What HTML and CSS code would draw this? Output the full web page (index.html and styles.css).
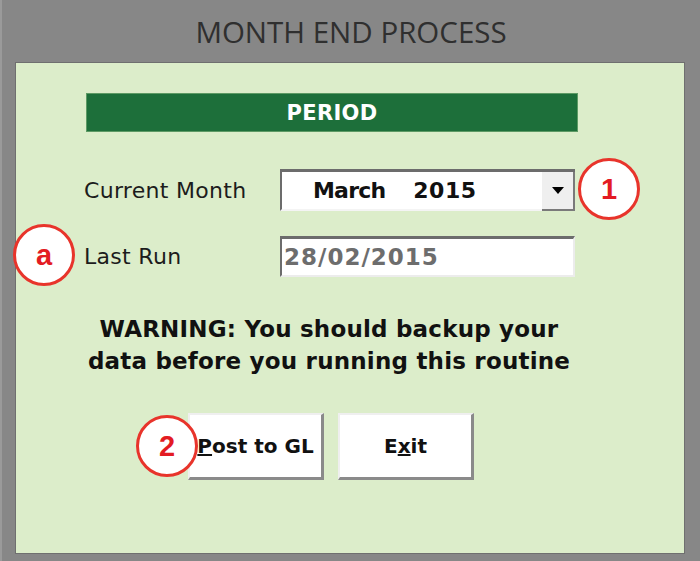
FILE: index.html
```html
<!DOCTYPE html>
<html lang="en">
<head>
    <meta charset="UTF-8">
    <meta name="viewport" content="width=device-width, initial-scale=1.0">
    <title>Month End Process</title>
    <link rel="stylesheet" href="styles.css">
</head>
<body>
    <div class="window">
        <div class="title">MONTH END PROCESS</div>
        <div class="panel">
            <div class="content">
                <div class="period">PERIOD</div>

                <div class="row row-month">
                    <label class="label">Current Month</label>
                    <div class="combo">
                        <div class="combo-text"><span class="month">March</span><span class="year">2015</span></div>
                        <div class="combo-btn"><span class="arrow"></span></div>
                    </div>
                </div>

                <div class="row row-run">
                    <label class="label">Last Run</label>
                    <div class="textbox">28/02/2015</div>
                </div>

                <p class="warning">WARNING: You should backup your<br>data before you running this routine</p>

                <div class="buttons">
                    <button class="btn"><u>P</u>ost to GL</button>
                    <button class="btn">E<u>x</u>it</button>
                </div>
            </div>

            <!-- callouts -->
            <div class="callout callout-a">a</div>
            <div class="callout callout-1">1</div>
            <div class="callout callout-2">2</div>
        </div>
    </div>
</body>
</html>
```

FILE: styles.css
```css
html, body { margin: 0; padding: 0; height: 561px; overflow: hidden; }
body { background: #878787; font-family: "DejaVu Sans", sans-serif; }

.window { width: 700px; height: 561px; box-sizing: border-box; border-left: 2px solid #9a9a9a; }
.title { height: 62px; line-height: 64px; text-align: center; font-family: "Open Sans", sans-serif; font-size: 29.5px; color: #2f2f2f; }

.panel { position: relative; margin-left: 13px; width: 668px; height: 490px; background: #dcedca; border: 1px solid #6f6f6f; }
.content { width: 492px; padding: 30px 0 0 70px; }

.period { height: 37px; line-height: 38px; background: #1d6f3a; border: 1px solid #5d9a64; color: #fff; font-weight: bold; font-size: 21px; letter-spacing: 0.3px; text-align: center; }

.row { display: flex; align-items: center; }
.row-month { margin-top: 37px; }
.row-run { margin-top: 25px; }
.label { width: 196px; margin-left: -2px; font-size: 22px; letter-spacing: 0.3px; color: #1c1c1c; }

.combo { display: flex; width: 295px; height: 42px; box-sizing: border-box; background: #fff; border-top: 3px solid #6c6c6c; border-left: 2px solid #6c6c6c; border-bottom: 2px solid #f4f4f4; }
.combo-text { flex: 1; display: flex; gap: 28px; padding-left: 31px; align-items: center; font-weight: bold; font-size: 22px; color: #111; }
.month { letter-spacing: -0.8px; }
.year { letter-spacing: 0.5px; }
.combo-btn { width: 33px; display: flex; align-items: center; justify-content: center; background: #efefef; border-bottom: 2px solid #7a7a7a; border-right: 2px solid #7a7a7a; box-sizing: border-box; margin-bottom: -2px; }
.arrow { width: 0; height: 0; border-left: 6px solid transparent; border-right: 6px solid transparent; border-top: 7px solid #000; }

.textbox { width: 295px; height: 41px; box-sizing: border-box; background: #fff; border-top: 3px solid #6c6c6c; border-left: 2px solid #6c6c6c; border-bottom: 2px solid #ececec; border-right: 2px solid #ececec; padding-left: 2px; line-height: 36px; font-size: 23px; letter-spacing: 1px; font-weight: bold; color: #6d6d6d; }

.warning { margin: 36px 0 0 -6px; text-align: center; font-weight: bold; font-size: 23px; letter-spacing: 0.2px; line-height: 32px; color: #111; white-space: nowrap; }

.buttons { display: flex; gap: 14px; margin: 36px 0 0 102px; }
.btn { width: 136px; height: 67px; background: #fff; border: none; border-top: 2px solid #efefef; border-left: 2px solid #efefef; border-bottom: 3px solid #8a8a8a; border-right: 3px solid #8a8a8a; font-family: inherit; font-weight: bold; font-size: 20px; color: #111; padding: 0; }
.btn u { text-decoration-thickness: 2px; }

.callout { position: absolute; width: 56px; height: 56px; border-radius: 50%; border: 3.5px solid #e8342b; background: #fff; color: #e31b23; font-family: "Liberation Sans", Arial, sans-serif; font-weight: bold; font-size: 29px; display: flex; align-items: center; justify-content: center; }
.callout-a { left: -3px; top: 161px; }
.callout-1 { left: 562px; top: 95px; }
.callout-2 { left: 120px; top: 352px; }
```
